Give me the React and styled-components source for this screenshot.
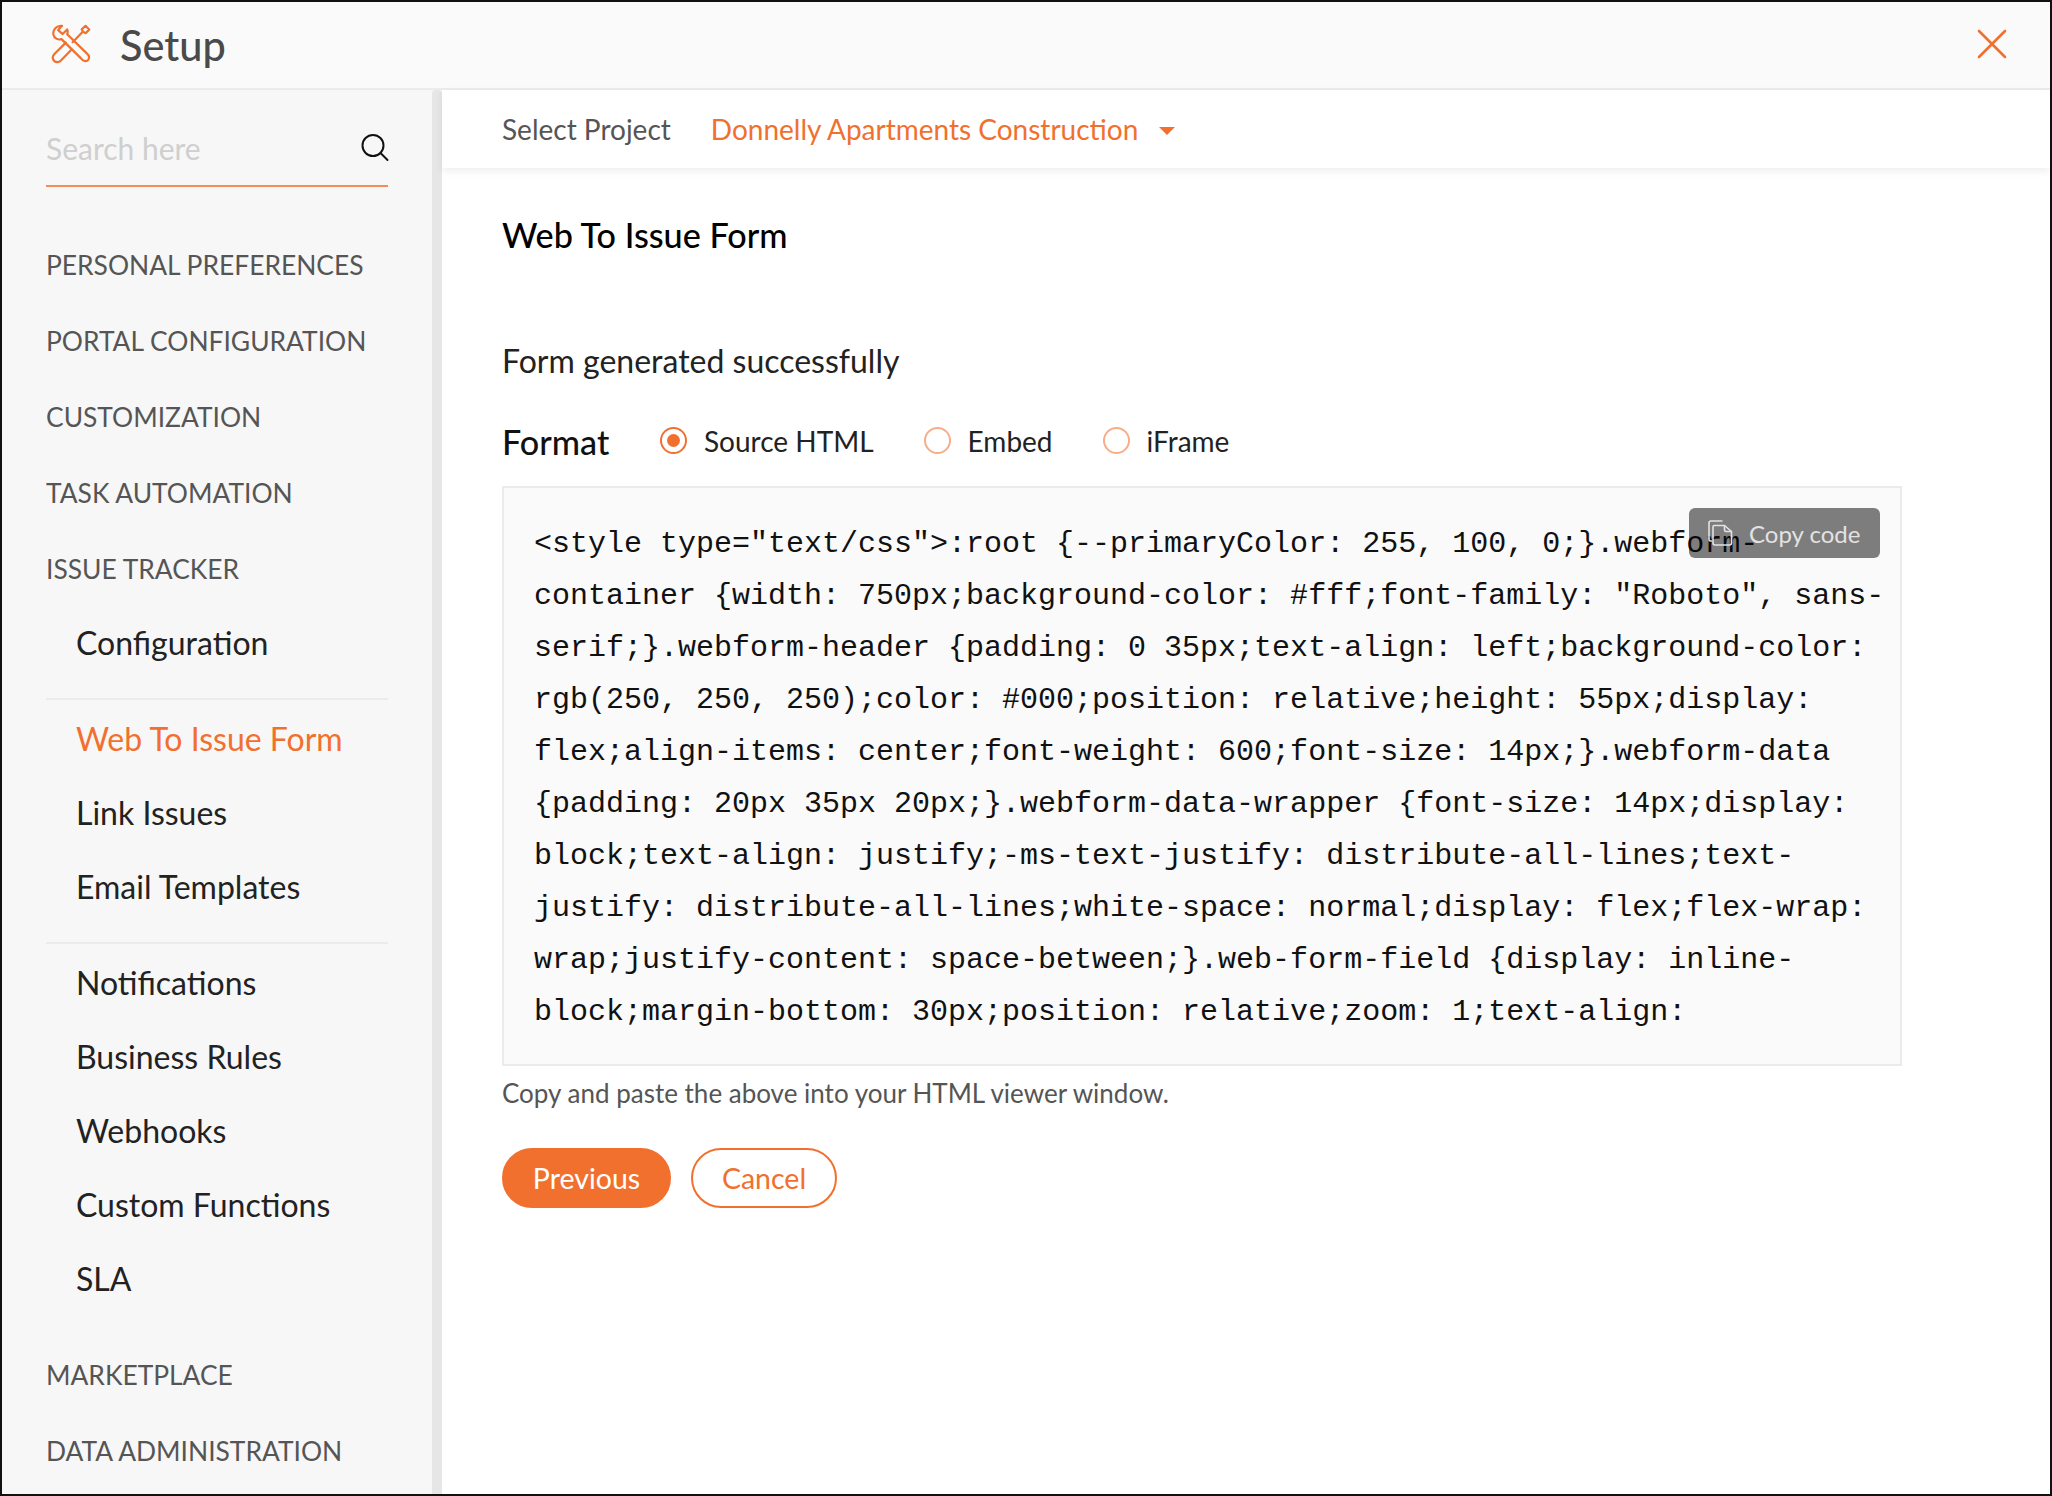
import React from "react";
import styled, { createGlobalStyle } from "styled-components";

const ORANGE = "#f1702e";

const Global = createGlobalStyle`
  html, body { margin: 0; padding: 0; background: #fff; }
  * { box-sizing: border-box; }
  body { font-family: Lato, "Noto Sans", sans-serif; }
`;

const Frame = styled.div`
  width: 2052px; height: 1496px; border: 2px solid #111; display: flex; flex-direction: column; overflow: hidden; background: #fff;
`;
const Header = styled.header`
  flex: none; height: 88px; background: #fafafa; border-bottom: 2px solid #ebebeb;
  display: flex; align-items: center; padding: 0 43px 2px 49px;
`;
const HeaderTitle = styled.h1`
  margin: 2px 0 0 29px; font-size: 41.5px; font-weight: 500; color: #4a4a4a; flex: 1; line-height: 48px;
`;
const Body = styled.div`
  flex: 1; display: flex; min-height: 0;
`;
const Sidebar = styled.aside`
  flex: none; width: 440px; display: flex; background: #f7f7f7;
`;
const NavColumn = styled.nav`
  flex: 1; padding: 0 44px 0 44px; display: flex; flex-direction: column;
`;
const ScrollTrack = styled.div`
  flex: none; width: 10px; background: #e6e6e6; border-radius: 4px 4px 0 0;
`;
const SearchBox = styled.div`
  height: 97px; margin-bottom: 39px; border-bottom: 2px solid #f58b58; display: flex; align-items: center; justify-content: space-between; padding-top: 19px;
`;
const SearchText = styled.span`
  font-size: 30px; color: #cfcfcf; line-height: 36px; margin-top: 2px;
`;
const SearchIconSlot = styled.span`
  display: flex; margin: 2px -1px 0 0;
`;
const SectionItem = styled.div`
  flex: none; height: 76px; display: flex; align-items: center; padding-top: 1px; font-size: 26.4px; color: #555; margin-top: ${p => p.$gap || 0}px;
`;
const Group = styled.div`
  padding-bottom: ${p => (p.$divider ? 18 : 0)}px; margin-bottom: 2px; border-bottom: ${p => (p.$divider ? "2px solid #ebebeb" : "none")};
`;
const SubItem = styled.div`
  height: 74px; display: flex; align-items: center; padding: 0 0 2px 30px; font-size: 32px; color: ${p => (p.$active ? ORANGE : "#222")};
`;
const Main = styled.main`
  flex: 1; display: flex; flex-direction: column; min-width: 0;
`;
const ProjectBar = styled.div`
  flex: none; height: 78px; display: flex; align-items: center; padding: 0 0 0 60px; background: #fff; box-shadow: 0 3px 8px rgba(0,0,0,.07); font-size: 28px;
`;
const ProjectLabel = styled.span`
  color: #555; margin-right: 40px;
`;
const ProjectName = styled.span`
  color: ${ORANGE};
`;
const Caret = styled.span`
  width: 0; height: 0; margin: 3px 0 0 21px; border-left: 8px solid transparent; border-right: 8px solid transparent; border-top: 8px solid ${ORANGE};
`;
const Content = styled.div`
  flex: 1; padding: 0 0 0 60px;
`;
const Title = styled.h2`
  margin: 46px 0 0; font-size: 34.2px; line-height: 42px; font-weight: 500; color: #000;
`;
const Success = styled.p`
  margin: 84px 0 0; font-size: 32px; line-height: 42px; color: #222;
`;
const FormatRow = styled.div`
  margin-top: 38px; height: 42px; display: flex; align-items: center;
`;
const FormatLabel = styled.span`
  font-size: 34.2px; font-weight: 500; color: #111; width: 158px;
`;
const RadioOption = styled.label`
  display: flex; align-items: center; font-size: 28px; color: #222; margin-right: ${p => p.$mr}px;
`;
const RadioCircle = styled.span`
  width: 27px; height: 27px; border-radius: 50%; margin-right: 17px; margin-top: -2px; border: 2px solid ${p => (p.$on ? ORANGE : "#f7ad88")}; display: flex; align-items: center; justify-content: center;
  &::after { content: ""; width: 13px; height: 13px; border-radius: 50%; background: ${p => (p.$on ? ORANGE : "transparent")}; }
`;
const CodeBox = styled.div`
  position: relative; margin-top: 24px; width: 1400px; height: 580px; background: #fafafa; border: 2px solid #ebebeb; padding: 30px 0 0 30px;
`;
const CodeLine = styled.div`
  font-family: "Liberation Mono", monospace; font-size: 30px; line-height: 52px; height: 52px; color: #111; white-space: pre;
`;
const CopyButton = styled.button`
  position: absolute; top: 20px; right: 20px; width: 191px; height: 50px; border: 0; border-radius: 6px; background: rgba(0,0,0,.5); color: #e2e2e2; font-family: inherit; font-size: 24px; display: flex; align-items: center; padding: 0 0 0 19px; gap: 15px;
`;
const Note = styled.p`
  margin: 9px 0 0; font-size: 26px; line-height: 36px; color: #555;
`;
const Actions = styled.div`
  margin-top: 37px; display: flex; gap: 20px;
`;
const Pill = styled.button`
  height: 60px; width: ${p => p.$w}px; border-radius: 30px; font-family: inherit; font-size: 28.5px; padding: 0;
  border: 2px solid ${ORANGE}; background: ${p => (p.$primary ? ORANGE : "#fff")}; color: ${p => (p.$primary ? "#fff" : ORANGE)};
`;

const ToolsIcon = () => (
  <svg width="40" height="40" viewBox="-1 -1 40 40" fill="none" stroke={ORANGE} strokeWidth="2.2" strokeLinejoin="round" strokeLinecap="round">
    <path d="M10 .8C5 .2.6 4.5 1.4 9.5c.7 3.6 4.4 5.9 8.1 4.6L29 33.4c2 2.6 5.4 3.8 7.2 1.4 1.6-2.2.6-4.7-1.4-6.4L15.2 9.2c.6-1.5.6-3.2 0-4.8l-4.6 4.7-4.4-4z" />
    <path d="M20.6 17.2 31 6.6M31 6.6l-1.3-2.2L33.5.8l3.7 3.8-3.6 3.6z" />
    <path d="M13.8 17.6 2.2 29.2c-2.8 2.9-1.2 7.8 3 8 1.7 0 3-.9 4-2l10.4-10.6" />
  </svg>
);
const SearchIcon = () => (
  <svg width="28" height="28" viewBox="0 0 28 28" fill="none" stroke="#111" strokeWidth="2">
    <circle cx="12" cy="11.5" r="10.5" />
    <path d="m19.5 19 7 7" strokeLinecap="round" />
  </svg>
);
const CloseIcon = () => (
  <svg width="30" height="30" viewBox="0 0 30 30" fill="none" stroke={ORANGE} strokeWidth="2.6" strokeLinecap="round">
    <path d="M2 2l26 26M28 2 2 28" />
  </svg>
);
const CopyIcon = () => (
  <svg width="26" height="26" viewBox="0 0 26 26" fill="none" stroke="#e2e2e2" strokeWidth="1.6" strokeLinejoin="round">
    <path d="M4 21H2.5A1.5 1.5 0 0 1 1 19.5V3a2 2 0 0 1 2-2h11.5" />
    <path d="M6 5.5h10.5l7 6V23a2 2 0 0 1-2 2H7a2 2 0 0 1-2-2V7a1.5 1.5 0 0 1 1-1.5z" />
    <path d="M16.5 5.5V10a1.5 1.5 0 0 0 1.5 1.5h5.5" />
  </svg>
);

const code = [
  `<style type="text/css">:root {--primaryColor: 255, 100, 0;}.webform-`,
  `container {width: 750px;background-color: #fff;font-family: "Roboto", sans-`,
  `serif;}.webform-header {padding: 0 35px;text-align: left;background-color:`,
  `rgb(250, 250, 250);color: #000;position: relative;height: 55px;display:`,
  `flex;align-items: center;font-weight: 600;font-size: 14px;}.webform-data`,
  `{padding: 20px 35px 20px;}.webform-data-wrapper {font-size: 14px;display:`,
  `block;text-align: justify;-ms-text-justify: distribute-all-lines;text-`,
  `justify: distribute-all-lines;white-space: normal;display: flex;flex-wrap:`,
  `wrap;justify-content: space-between;}.web-form-field {display: inline-`,
  `block;margin-bottom: 30px;position: relative;zoom: 1;text-align:`,
];

export default function App() {
  return (
    <Frame>
      <Global />
      <Header>
        <ToolsIcon />
        <HeaderTitle>Setup</HeaderTitle>
        <CloseIcon />
      </Header>
      <Body>
        <Sidebar>
          <NavColumn>
            <SearchBox>
              <SearchText>Search here</SearchText>
              <SearchIconSlot><SearchIcon /></SearchIconSlot>
            </SearchBox>
            <SectionItem>PERSONAL PREFERENCES</SectionItem>
            <SectionItem>PORTAL CONFIGURATION</SectionItem>
            <SectionItem>CUSTOMIZATION</SectionItem>
            <SectionItem>TASK AUTOMATION</SectionItem>
            <SectionItem>ISSUE TRACKER</SectionItem>
            <Group $divider>
              <SubItem>Configuration</SubItem>
            </Group>
            <Group $divider>
              <SubItem $active>Web To Issue Form</SubItem>
              <SubItem>Link Issues</SubItem>
              <SubItem>Email Templates</SubItem>
            </Group>
            <Group>
              <SubItem>Notifications</SubItem>
              <SubItem>Business Rules</SubItem>
              <SubItem>Webhooks</SubItem>
              <SubItem>Custom Functions</SubItem>
              <SubItem>SLA</SubItem>
            </Group>
            <SectionItem $gap={18}>MARKETPLACE</SectionItem>
            <SectionItem>DATA ADMINISTRATION</SectionItem>
          </NavColumn>
          <ScrollTrack />
        </Sidebar>
        <Main>
          <ProjectBar>
            <ProjectLabel>Select Project</ProjectLabel>
            <ProjectName>Donnelly Apartments Construction</ProjectName>
            <Caret />
          </ProjectBar>
          <Content>
            <Title>Web To Issue Form</Title>
            <Success>Form generated successfully</Success>
            <FormatRow>
              <FormatLabel>Format</FormatLabel>
              <RadioOption $mr={50}><RadioCircle $on />Source HTML</RadioOption>
              <RadioOption $mr={50}><RadioCircle />Embed</RadioOption>
              <RadioOption $mr={0}><RadioCircle />iFrame</RadioOption>
            </FormatRow>
            <CodeBox>
              {code.map(line => <CodeLine key={line}>{line}</CodeLine>)}
              <CopyButton><CopyIcon />Copy code</CopyButton>
            </CodeBox>
            <Note>Copy and paste the above into your HTML viewer window.</Note>
            <Actions>
              <Pill $primary $w={169}>Previous</Pill>
              <Pill $w={146}>Cancel</Pill>
            </Actions>
          </Content>
        </Main>
      </Body>
    </Frame>
  );
}
